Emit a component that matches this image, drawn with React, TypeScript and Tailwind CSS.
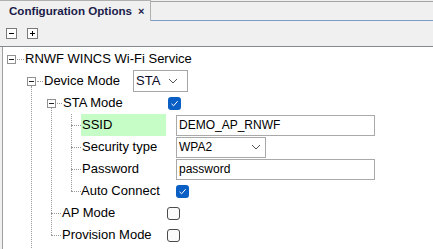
import React from "react";

const font = { fontFamily: '"Liberation Sans", Arial, sans-serif' };

function Expander() {
  return (
    <div className="relative h-[9px] w-[9px] shrink-0 border border-[#919191] bg-white">
      <div className="absolute left-[1px] top-[3px] h-px w-[5px] bg-[#222]" />
    </div>
  );
}

function HDots({ w }: { w: number }) {
  return <div className="h-0 shrink-0 border-t border-dotted border-[#9a9a9a]" style={{ width: w }} />;
}

function Checked() {
  return (
    <div className="flex h-[13px] w-[13px] items-center justify-center rounded-[3px] bg-[#0a5fc4]">
      <svg width="9" height="9" viewBox="0 0 9 9">
        <path d="M1.5 4.8 L3.6 6.8 L7.6 2.2" fill="none" stroke="#fff" strokeWidth="1" />
      </svg>
    </div>
  );
}

function Unchecked() {
  return <div className="h-[13px] w-[13px] rounded-[3px] border border-[#4a4a4a] bg-[#fbfbfb]" />;
}

function Chevron() {
  return (
    <svg width="10" height="6" viewBox="0 0 10 6">
      <path d="M1 1 L5 5 L9 1" fill="none" stroke="#555" strokeWidth="1" />
    </svg>
  );
}

export default function App() {
  return (
    <div className="h-[249px] w-[433px] overflow-hidden bg-[#f0f0f0] text-black" style={font}>
      {/* Tab bar */}
      <div className="flex h-[21px]">
        <div className="flex h-[21px] w-[151px] items-center border-r border-t border-[#b0b0b0] border-l-white bg-[#f0f0f0] pl-[9px]">
          <span className="text-[11.6px] font-bold text-[#1b1b4a]">Configuration Options</span>
          <span className="ml-[6px] text-[11px] font-bold text-[#1b1b4a]">×</span>
        </div>
        <div className="flex flex-1 flex-col">
          <div className="mt-[1px] h-px bg-[#a4a4a4]" />
          <div className="flex-1" />
          <div className="h-px bg-[#7a9cc2]" />
        </div>
      </div>
      {/* Toolbar */}
      <div className="flex h-[25px] items-start gap-[10px] pl-[6px] pt-[7px]">
        <div className="relative h-[11px] w-[11px] border border-[#7a7a7a] bg-white">
          <div className="absolute left-[2px] top-[4px] h-px w-[5px] bg-black" />
        </div>
        <div className="relative h-[11px] w-[11px] border border-[#7a7a7a] bg-white">
          <div className="absolute left-[2px] top-[4px] h-px w-[5px] bg-black" />
          <div className="absolute left-[4px] top-[2px] h-[5px] w-px bg-black" />
        </div>
      </div>
      <div className="h-px bg-[#828790]" />
      {/* Content */}
      <div className="ml-[2px] h-[202px] border-l border-[#a0a0a0] bg-white">
        <div className="relative pt-[1px] text-[13px]">
          {/* vertical tree lines */}
          <div className="absolute left-[28px] top-[39px] h-[170px] border-l border-dotted border-[#9a9a9a]" />
          <div className="absolute left-[48px] top-[61px] h-[127px] border-l border-dotted border-[#9a9a9a]" />
          <div className="absolute left-[68px] top-[67px] h-[77px] border-l border-dotted border-[#9a9a9a]" />

          {/* Row 1 */}
          <div className="flex h-[22px] items-center pl-[4px]">
            <Expander />
            <div className="w-[1px]" />
            <HDots w={7} />
            <div className="w-[1px]" />
            <span>RNWF WINCS Wi-Fi Service</span>
          </div>
          {/* Row 2 */}
          <div className="flex h-[22px] items-center pl-[24px]">
            <Expander />
            <div className="w-[1px]" />
            <HDots w={6} />
            <div className="w-[1px]" />
            <div className="w-[89px]">Device Mode</div>
            <div className="flex h-[22px] w-[55px] items-center justify-between border border-[#a6a6a6] bg-white pl-[2px] pr-[9px]">
              <span className="text-[#0a0a2a]">STA</span>
              <Chevron />
            </div>
          </div>
          {/* Row 3 */}
          <div className="flex h-[22px] items-center pl-[44px]">
            <Expander />
            <div className="w-[1px]" />
            <HDots w={5} />
            <div className="w-[1px]" />
            <div className="w-[105px]">STA Mode</div>
            <Checked />
          </div>
          {/* Row 4 SSID */}
          <div className="flex h-[22px] items-center pl-[68px]">
            <HDots w={10} />
            <div className="flex h-[22px] w-[85px] items-center bg-[#c6fcc6] pl-[1px]">SSID</div>
            <div className="w-[10px]" />
            <div className="flex h-[21px] w-[199px] items-center border border-[#a9a9a9] bg-white pl-[2px] text-[12px]">
              DEMO_AP_RNWF
            </div>
          </div>
          {/* Row 5 Security type */}
          <div className="flex h-[22px] items-center pl-[68px]">
            <HDots w={10} />
            <div className="w-[85px] pl-[1px]">Security type</div>
            <div className="w-[10px]" />
            <div className="flex h-[21px] w-[90px] items-center justify-between border border-[#a9a9a9] bg-white pl-[2px] pr-[4px] text-[12px]">
              <span>WPA2</span>
              <Chevron />
            </div>
          </div>
          {/* Row 6 Password */}
          <div className="flex h-[22px] items-center pl-[68px]">
            <HDots w={10} />
            <div className="w-[85px] pl-[1px]">Password</div>
            <div className="w-[10px]" />
            <div className="flex h-[21px] w-[199px] items-center border border-[#a9a9a9] bg-white pl-[2px] text-[12px]">
              password
            </div>
          </div>
          {/* Row 7 Auto Connect */}
          <div className="flex h-[22px] items-center pl-[68px]">
            <HDots w={10} />
            <div className="w-[85px]">Auto Connect</div>
            <div className="w-[10px]" />
            <Checked />
          </div>
          {/* Row 8 AP Mode */}
          <div className="flex h-[22px] items-center pl-[48px]">
            <HDots w={10} />
            <div className="w-[1px]" />
            <div className="w-[105px]">AP Mode</div>
            <Unchecked />
          </div>
          {/* Row 9 Provision Mode */}
          <div className="flex h-[22px] items-center pl-[48px]">
            <HDots w={10} />
            <div className="w-[1px]" />
            <div className="w-[105px]">Provision Mode</div>
            <Unchecked />
          </div>
        </div>
      </div>
    </div>
  );
}
